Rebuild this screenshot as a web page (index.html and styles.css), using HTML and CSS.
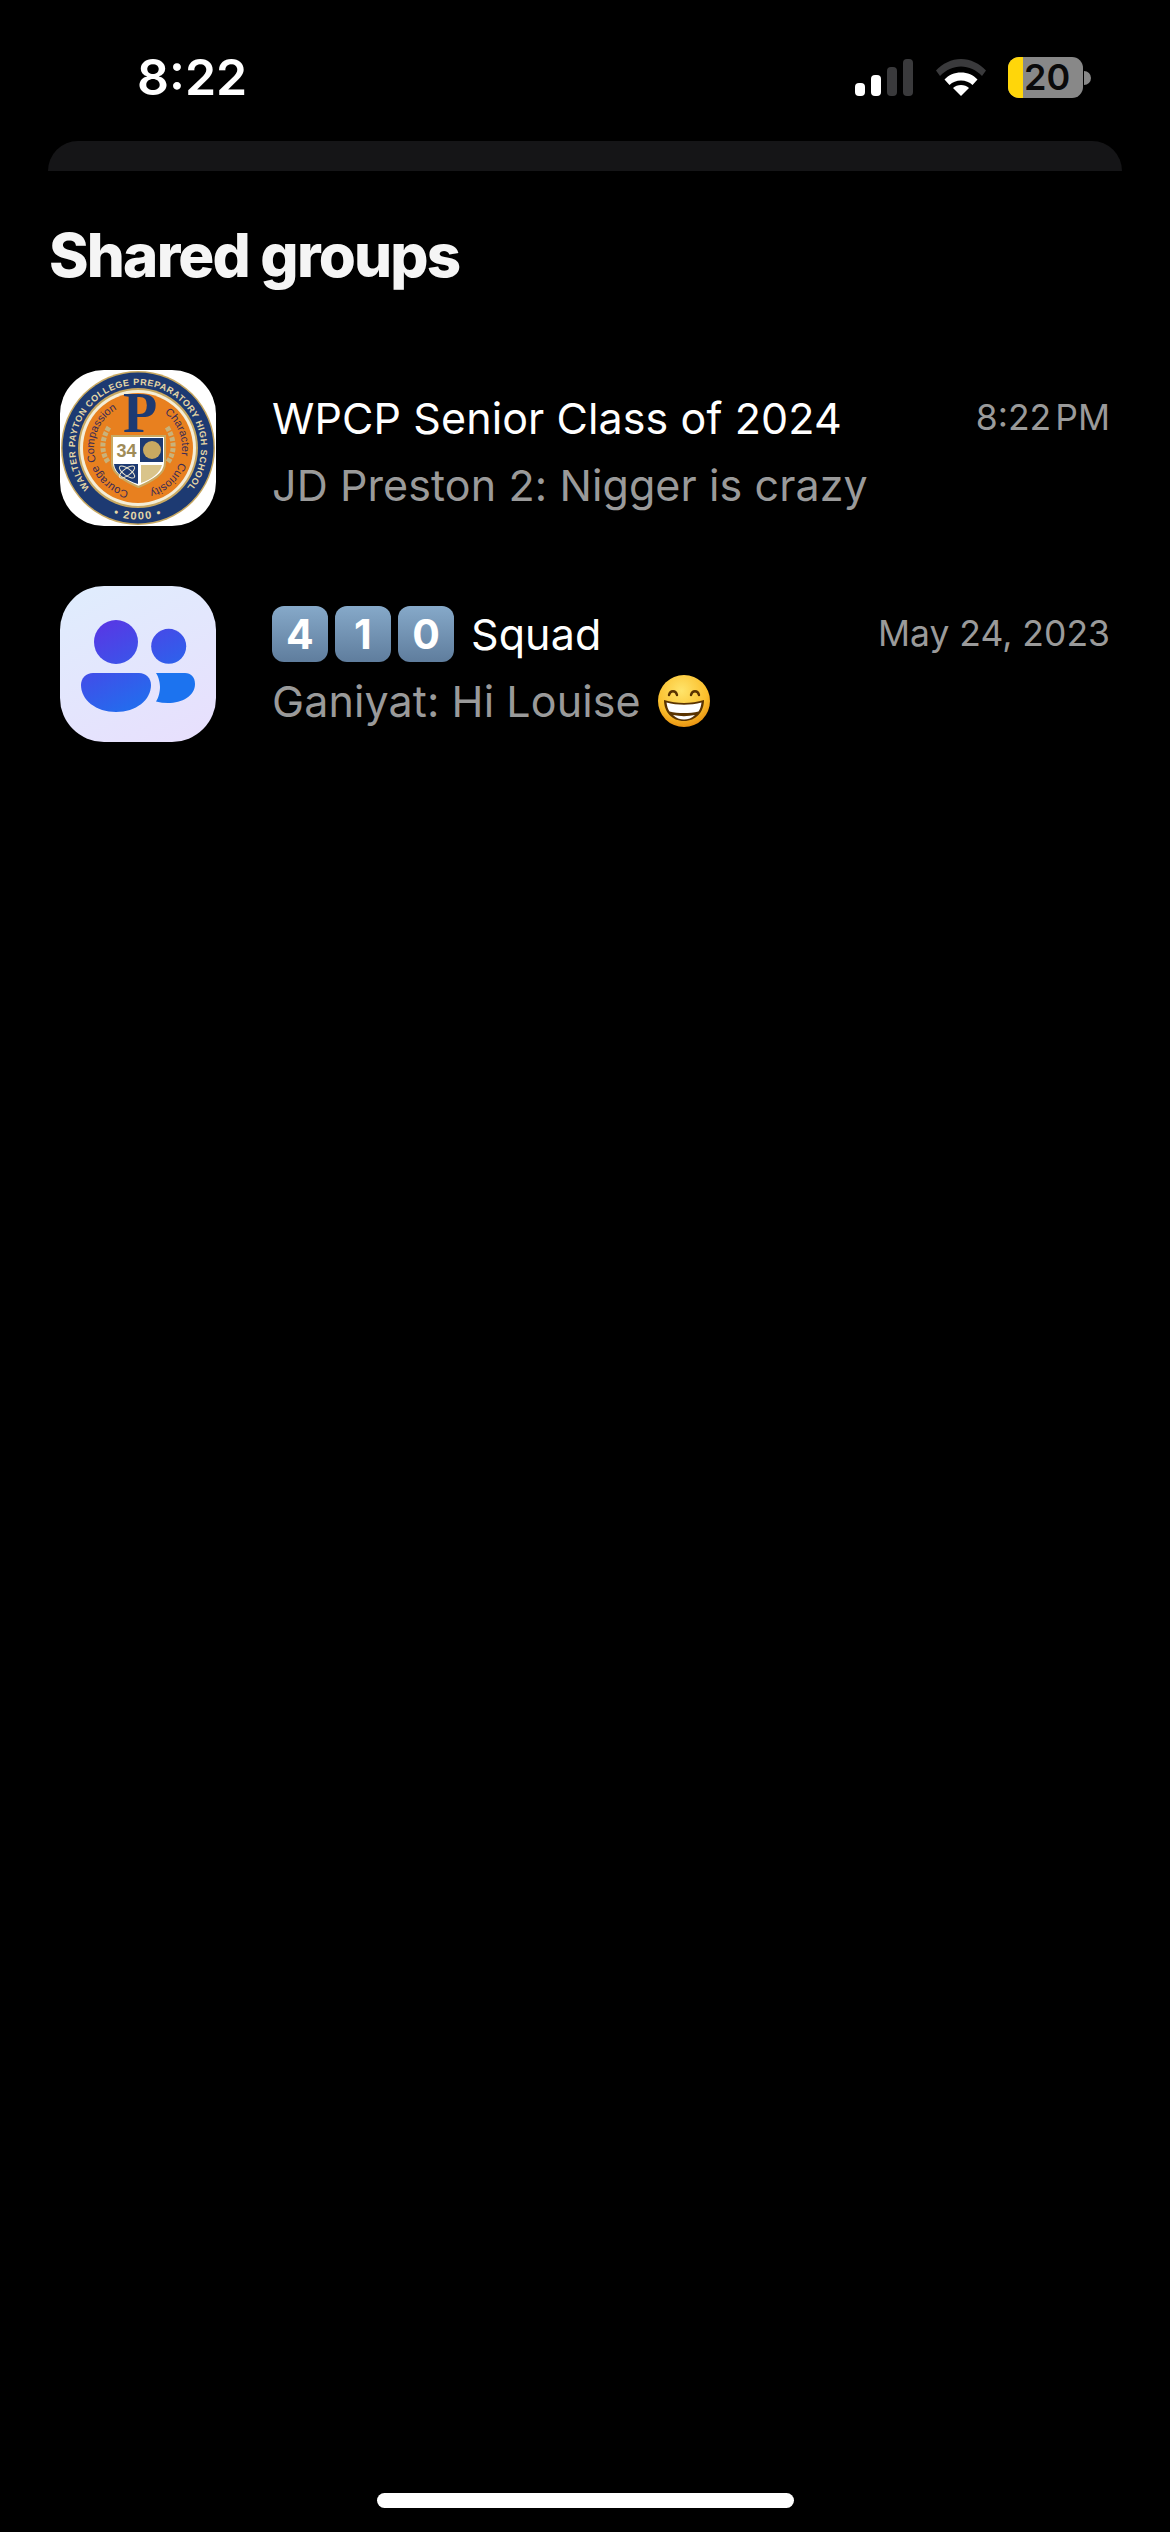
FILE: index.html
```html
<!DOCTYPE html>
<html lang="en">
<head>
    <meta charset="UTF-8">
    <title>Shared groups</title>
    <link rel="stylesheet" href="styles.css">
</head>
<body>
<div class="page">
    <div class="status-bar">
        <div class="clock">8:22</div>
        <div class="status-icons">
            <div class="signal">
                <span class="bar bar-1"></span>
                <span class="bar bar-2"></span>
                <span class="bar bar-3 dim"></span>
                <span class="bar bar-4 dim"></span>
            </div>
            <svg class="wifi" viewBox="0 0 50 37">
                <path d="M0 11.500C6.500 4.500 15.500 0 25 0s18.500 4.500 25 11.500l-4 5.500C40 11 33 7.500 25 7.500S10 11 4 17z" fill="#3a3a3c"/>
                <path d="M8.500 20.500C12.500 16 18.500 13.500 25 13.500s12.500 2.500 16.500 7l-5 5.500C33.500 23 29.500 21.500 25 21.500S16.500 23 13.500 26z" fill="#fff"/>
                <path d="M17 29c2-2 5-3 8-3s6 1 8 3l-8 8z" fill="#fff"/>
            </svg>
            <div class="battery">
                <div class="battery-body">
                    <span class="battery-fill"></span>
                    <span class="battery-level">20</span>
                </div>
                <span class="battery-nub"></span>
            </div>
        </div>
    </div>

    <div class="sheet-edge"></div>

    <h1 class="section-title">Shared groups</h1>

    <div class="group-list">
        <div class="group-row">
            <svg class="group-icon" viewBox="0 0 156 156">
                <defs>
                    <path id="seal-top" d="M39.200 127.600A63 63 0 1 1 116.800 127.600"/>
                    <path id="seal-bottom" d="M42.300 139.900A71.500 71.500 0 0 0 113.700 139.900"/>
                    <path id="motto-ring" d="M78 122a44 44 0 1 1 0-88a44 44 0 1 1 0 88"/>
                </defs>
                <rect width="156" height="156" rx="44" fill="#fff"/>
                <circle cx="78" cy="78" r="77" fill="#c9a961"/>
                <circle cx="78" cy="78" r="75.500" fill="#1d3a72"/>
                <circle cx="78" cy="78" r="60" fill="#c9a961"/>
                <circle cx="78" cy="78" r="58" fill="#f4eed8"/>
                <circle cx="78" cy="78" r="55" fill="#e8801f"/>
                <text class="seal-text"><textPath href="#seal-top" startOffset="50%">WALTER PAYTON COLLEGE PREPARATORY HIGH SCHOOL</textPath></text>
                <text class="seal-date"><textPath href="#seal-bottom" startOffset="50%">• 2000 •</textPath></text>
                <text class="motto-text"><textPath href="#motto-ring" startOffset="31%">Compassion</textPath></text>
                <text class="motto-text"><textPath href="#motto-ring" startOffset="69%">Character</textPath></text>
                <text class="motto-text"><textPath href="#motto-ring" startOffset="88%">Curiosity</textPath></text>
                <text class="motto-text"><textPath href="#motto-ring" startOffset="11%">Courage</textPath></text>
                <path class="laurel" d="M48 92C41 82 41 70 49 57M108 92c7-10 7-22-1-35"/>
                <path d="M52 66h53v27c0 11-13 18-26.500 24C65 111 52 104 52 93z" fill="#fff" stroke="#c9a961" stroke-width="2"/>
                <path d="M80 68h23v24H80zM54 94h24v20C66 110 55 104 54 94z" fill="#1d3a72"/>
                <circle cx="92" cy="80" r="9" fill="#c9a961"/>
                <path d="M81 95h21c-2 8-10 14-21 18z" fill="#d9c48a"/>
                <g class="atom">
                    <ellipse cx="67" cy="102" rx="9" ry="3.500" transform="rotate(35 67 102)"/>
                    <ellipse cx="67" cy="102" rx="9" ry="3.500" transform="rotate(-35 67 102)"/>
                </g>
                <text class="shield-number" x="66.500" y="87">34</text>
                <text class="seal-letter" x="80" y="62">P</text>
            </svg>
            <div class="group-text">
                <div class="group-top">
                    <div class="group-name">WPCP Senior Class of 2024</div>
                    <div class="group-time tight">8:22 PM</div>
                </div>
                <div class="group-preview">JD Preston 2: Nigger is crazy</div>
            </div>
        </div>

        <div class="group-row">
            <svg class="group-icon" viewBox="0 0 156 156">
                <defs>
                    <linearGradient id="tile" x1="0.250" y1="0" x2="0.750" y2="1">
                        <stop offset="0" stop-color="#e0ecfd"/>
                        <stop offset="1" stop-color="#e7e0fd"/>
                    </linearGradient>
                    <linearGradient id="people" gradientUnits="userSpaceOnUse" x1="45" y1="30" x2="95" y2="125">
                        <stop offset="0" stop-color="#5a35e4"/>
                        <stop offset="1" stop-color="#1c73ef"/>
                    </linearGradient>
                </defs>
                <rect width="156" height="156" rx="44" fill="url(#tile)"/>
                <circle cx="56" cy="56" r="22" fill="url(#people)"/>
                <circle cx="108.700" cy="60.300" r="17.500" fill="url(#people)"/>
                <path d="M33 87h46c7 0 12 5 12 12 0 15-15 27-35 27s-35-12-35-27c0-7 5-12 12-12z" fill="url(#people)"/>
                <path d="M96 87h29c6 0 10 4 10 11 0 12-13 19-27 19-4 0-8-.5-12-1.500 3-4 4-11 4-14.500s-1-9.500-4-14z" fill="#1c73ef"/>
            </svg>
            <div class="group-text">
                <div class="group-top">
                    <div class="group-name">
                        <span class="keycap">4</span><span class="keycap">1</span><span class="keycap">0</span>
                        <span class="squad">Squad</span>
                    </div>
                    <div class="group-time">May 24, 2023</div>
                </div>
                <div class="group-preview">
                    Ganiyat: Hi Louise
                    <svg class="grin" viewBox="0 0 52 52">
                        <defs>
                            <radialGradient id="grin-face" cx="0.450" cy="0.300" r="0.750">
                                <stop offset="0" stop-color="#ffe46b"/>
                                <stop offset="0.650" stop-color="#fbbf2c"/>
                                <stop offset="1" stop-color="#e58a0c"/>
                            </radialGradient>
                        </defs>
                        <circle cx="26" cy="26" r="26" fill="url(#grin-face)"/>
                        <path d="M11 20c1-5 7-5 8 0M33 20c1-5 7-5 8 0" fill="none" stroke="#5a3300" stroke-width="2.400" stroke-linecap="round"/>
                        <path d="M6 25c13 4 27 4 40 0 0 12-8 21-20 21S6 37 6 25z" fill="#5a3300"/>
                        <path d="M8.500 27.500c11 3 24 3 35 0-.5 4-1.500 7-3 9-9 2-20 2-29 0-1.500-2-2.500-5-3-9zM15 40c7 1.500 15 1.500 22 0-3 3-7 4.500-11 4.500S18 43 15 40z" fill="#fff"/>
                    </svg>
                </div>
            </div>
        </div>
    </div>

    <div class="home-indicator"></div>
</div>
</body>
</html>
```

FILE: styles.css
```css
* {
    box-sizing: border-box;
}

body {
    margin: 0;
    background: #000;
    font-family: Inter, "Liberation Sans", sans-serif;
    color: #fff;
}

.page {
    height: 2532px;
    display: flex;
    flex-direction: column;
    overflow: hidden;
}

/* status bar */
.status-bar {
    height: 141px;
    padding: 52px 79px 0 137px;
    display: flex;
    justify-content: space-between;
    align-items: flex-start;
}
.clock {
    font-size: 50px;
    font-weight: 600;
    line-height: 50px;
}
.status-icons {
    display: flex;
    align-items: flex-start;
    padding-top: 5px;
}
.signal {
    display: flex;
    align-items: flex-end;
    gap: 6px;
    height: 37px;
    margin-top: 2px;
    margin-right: 23px;
}
.bar {
    width: 10px;
    border-radius: 4px;
    background: #fff;
}
.bar.dim {
    background: #3a3a3c;
}
.bar-1 { height: 13px; }
.bar-2 { height: 21px; }
.bar-3 { height: 29px; }
.bar-4 { height: 37px; }
.wifi {
    width: 50px;
    height: 37px;
    margin-top: 2px;
    margin-right: 22px;
}
.battery {
    display: flex;
    align-items: center;
    height: 41px;
}
.battery-body {
    width: 75px;
    height: 41px;
    padding-left: 16px;
    border-radius: 11px;
    background: #888;
    position: relative;
}
.battery-fill {
    position: absolute;
    top: 0;
    left: 0;
    width: 15px;
    height: 41px;
    border-radius: 11px 0 0 11px;
    background: #ffd60a;
}
.battery-level {
    position: relative;
    font-size: 36px;
    font-weight: 600;
    line-height: 41px;
    color: #0a0a0a;
}
.battery-nub {
    width: 7px;
    height: 14px;
    margin-left: 1px;
    border-radius: 0 7px 7px 0;
    background: #888;
}

/* edge of the sheet behind */
.sheet-edge {
    height: 30px;
    margin: 0 48px;
    border-radius: 30px 30px 0 0;
    background: #151517;
}

.section-title {
    margin: 50px 0 0 49px;
    font-size: 60px;
    font-weight: 800;
    line-height: 68px;
    letter-spacing: -1.800px;
    color: #f5f5f5;
}

/* group rows */
.group-list {
    margin-top: 81px;
    padding: 0 60px;
    display: flex;
    flex-direction: column;
    gap: 60px;
}
.group-row {
    display: flex;
    align-items: center;
    gap: 56px;
    height: 156px;
}
.group-icon {
    width: 156px;
    height: 156px;
    flex-shrink: 0;
}
.group-text {
    flex: 1;
    display: flex;
    flex-direction: column;
    gap: 15px;
    margin-top: 6px;
}
.group-top {
    display: flex;
    justify-content: space-between;
    align-items: center;
    height: 52px;
}
.group-name {
    display: flex;
    align-items: center;
    font-size: 43px;
    font-weight: 400;
    line-height: 52px;
    letter-spacing: 0.1px;
}
.group-time {
    font-size: 35.500px;
    line-height: 52px;
    color: #9a9a9a;
}
.group-time.tight {
    word-spacing: -6px;
}
.group-preview {
    display: flex;
    align-items: center;
    gap: 17px;
    height: 52px;
    font-size: 43px;
    line-height: 52px;
    letter-spacing: 0.1px;
    color: #9a9a9a;
}

.keycap {
    width: 56px;
    height: 56px;
    margin-right: 7px;
    border-radius: 12px;
    background: linear-gradient(#86a9c9, #5f7d9d);
    font-size: 41px;
    font-weight: 700;
    line-height: 56px;
    text-align: center;
}
.squad {
    margin-left: 10px;
}
.grin {
    width: 52px;
    height: 52px;
}

/* seal lettering */
.seal-text {
    font-family: "Liberation Sans", sans-serif;
    font-size: 9px;
    font-weight: 700;
    letter-spacing: 0.600px;
    text-anchor: middle;
    fill: #e5d7a6;
}
.seal-date {
    font-family: "Liberation Sans", sans-serif;
    font-size: 11px;
    font-weight: 700;
    letter-spacing: 1.500px;
    text-anchor: middle;
    fill: #e5d7a6;
}
.motto-text {
    font-family: "Liberation Sans", sans-serif;
    font-size: 11px;
    text-anchor: middle;
    fill: #3a2a55;
}
.shield-number {
    font-family: "Liberation Sans", sans-serif;
    font-size: 18px;
    font-weight: 700;
    text-anchor: middle;
    fill: #a08c58;
}
.seal-letter {
    font-family: "Liberation Serif", serif;
    font-size: 56px;
    font-weight: 700;
    text-anchor: middle;
    fill: #1d3a72;
}
.laurel {
    fill: none;
    stroke: #c9b27a;
    stroke-width: 5;
    stroke-dasharray: 4 1.500;
}
.atom ellipse {
    fill: none;
    stroke: #e8e4d0;
    stroke-width: 1;
}

.home-indicator {
    width: 417px;
    height: 15px;
    margin: auto auto 24px;
    border-radius: 8px;
    background: #fff;
}
```
